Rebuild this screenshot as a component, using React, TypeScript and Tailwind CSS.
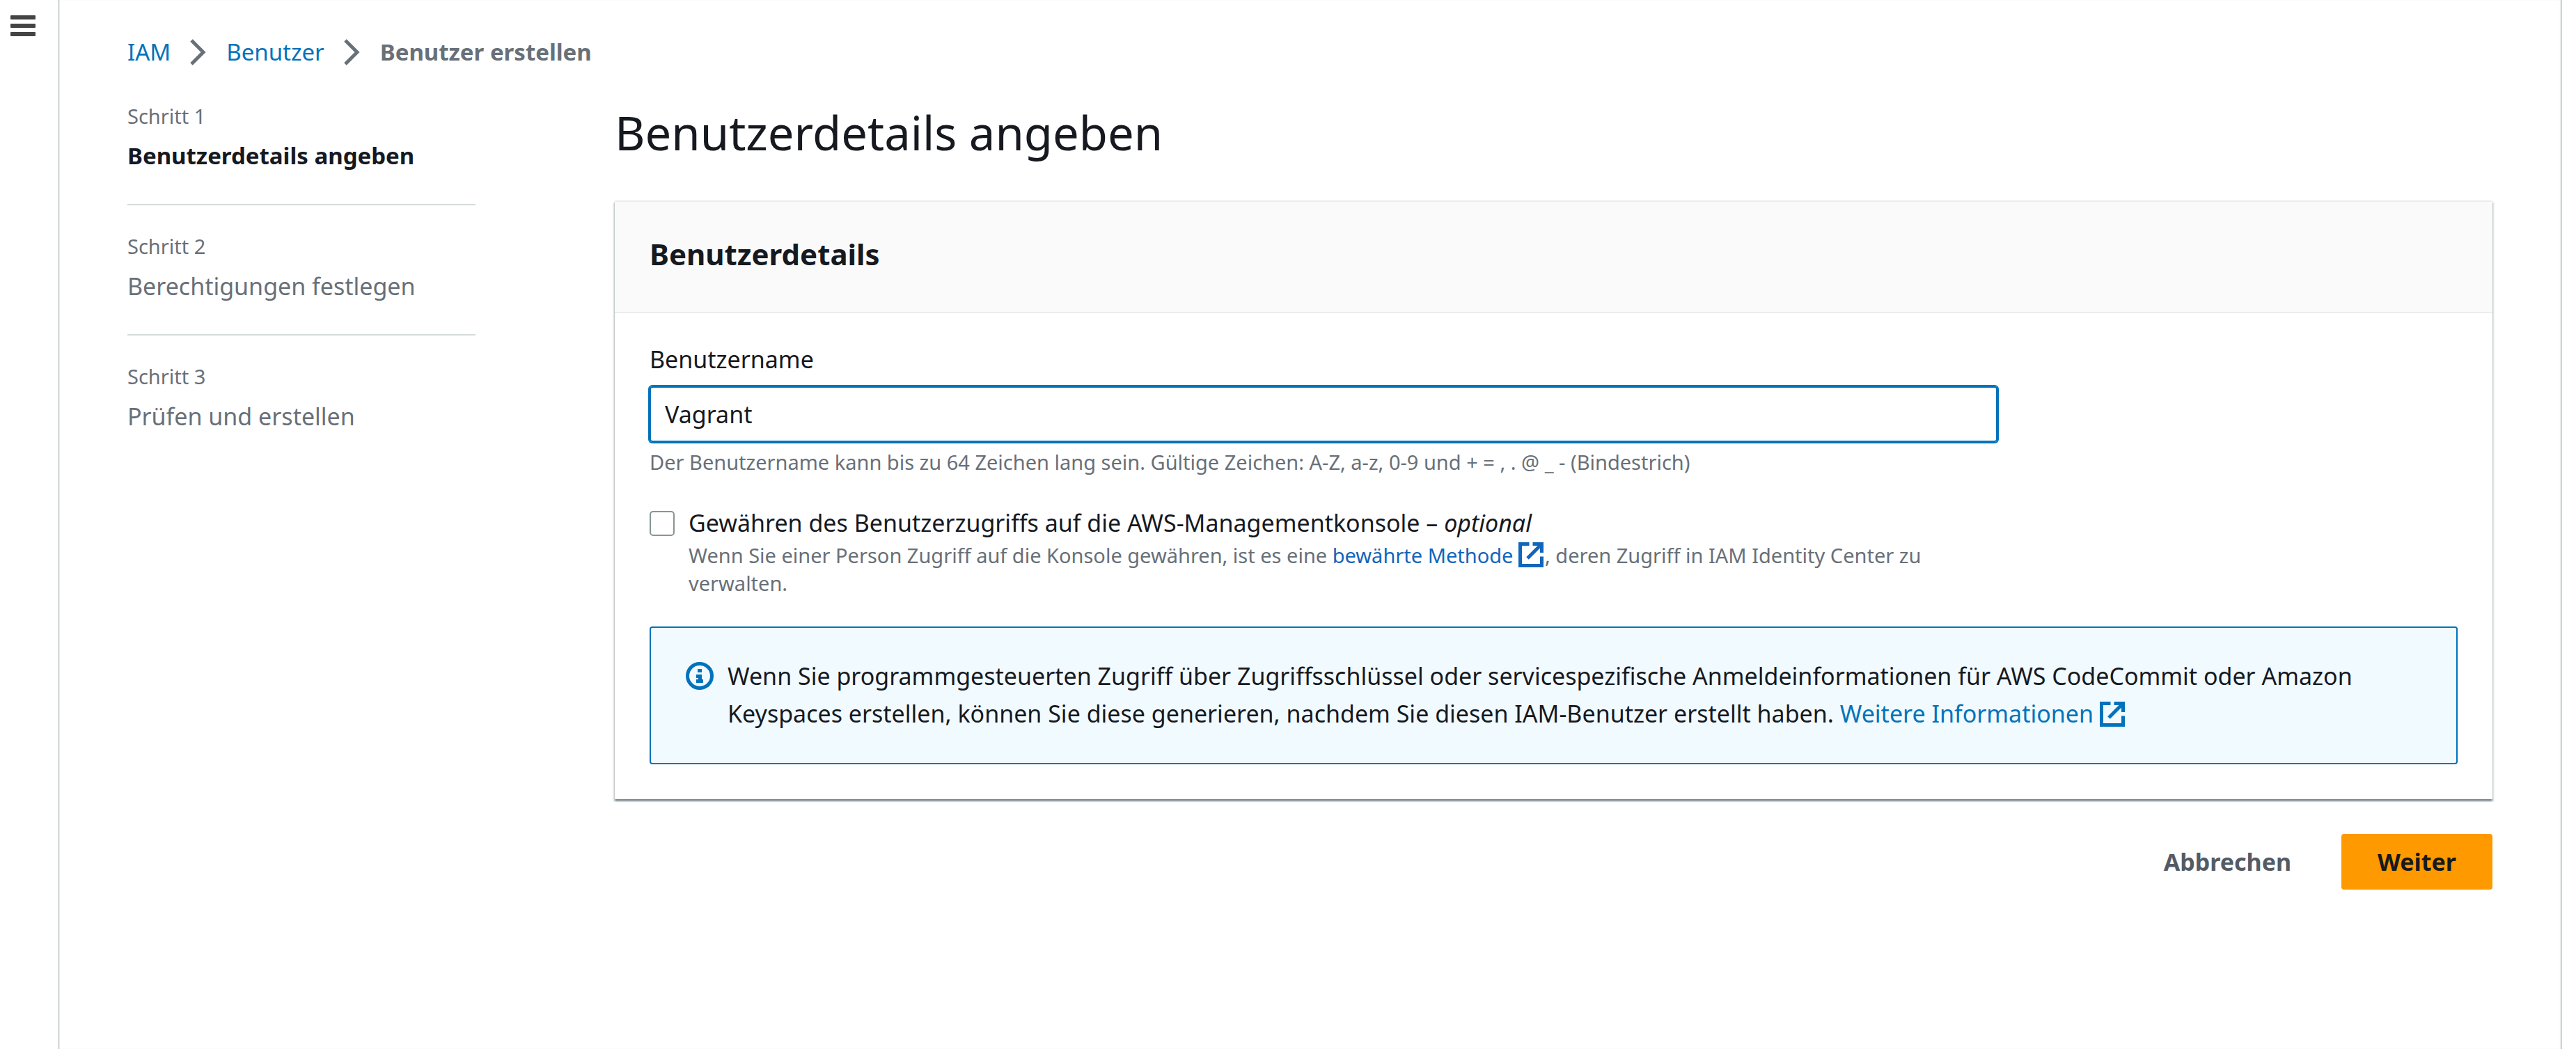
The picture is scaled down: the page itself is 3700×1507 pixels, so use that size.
import { useState, type ReactNode } from "react";

const steps = [
  { label: "Schritt 1", title: "Benutzerdetails angeben", active: true },
  { label: "Schritt 2", title: "Berechtigungen festlegen", active: false },
  { label: "Schritt 3", title: "Prüfen und erstellen", active: false },
];

function MenuIcon() {
  return (
    <svg viewBox="0 0 36 30" className="h-[30px] w-9" fill="#444444" aria-hidden="true">
      <rect width="36" height="6" rx="1" />
      <rect y="12" width="36" height="6" rx="1" />
      <rect y="24" width="36" height="6" rx="1" />
    </svg>
  );
}

function ChevronIcon() {
  return (
    <svg viewBox="0 0 24 38" className="h-[38px] w-6 shrink-0" fill="none" stroke="#687078" strokeWidth="5" aria-hidden="true">
      <path d="M2 2 19 19 2 36" />
    </svg>
  );
}

function ExternalIcon() {
  return (
    <svg viewBox="0 0 36 36" className="mr-0.5 inline-block size-9 align-[-6px]" fill="none" stroke="currentColor" strokeWidth="5" aria-hidden="true">
      <path d="M15.5 2.5H2.5V33.5H33.5V20.5" />
      <path d="M20.5 2.5H33.5V15" />
      <path d="M33 3 13 23" />
    </svg>
  );
}

function InfoIcon() {
  return (
    <svg viewBox="0 0 40 40" className="size-10 shrink-0" fill="none" stroke="#0073bb" aria-hidden="true">
      <circle cx="20" cy="20" r="17.5" strokeWidth="5" />
      <path d="M17 10h6v5h-6zM15 18h8v7h2v5H15v-5h3v-2h-3z" fill="#0073bb" stroke="none" />
    </svg>
  );
}

function ExternalLink({ className, children }: { className: string; children: ReactNode }) {
  return (
    <a href="#" className={className}>
      {children} <ExternalIcon />
    </a>
  );
}

export default function App() {
  const [name, setName] = useState("Vagrant");
  const [consoleAccess, setConsoleAccess] = useState(false);

  return (
    <div className="flex min-h-screen bg-white font-['Noto_Sans',sans-serif] text-[34px] leading-[54px] text-[#16191f]">
      <aside className="w-[83px] shrink-0 pt-[22px] pl-[15px]">
        <button type="button" aria-label="Navigation öffnen" className="block">
          <MenuIcon />
        </button>
      </aside>

      <div className="mr-5 min-w-0 flex-1 border-x border-[#c3c9cc] pt-12 pr-[99px] pb-[100px] pl-[99px] shadow-[inset_2px_0_1px_#e6eaea,inset_-2px_0_1px_#e6eaea]">
        <nav aria-label="Breadcrumb" className="mb-[45px] flex items-center gap-7 text-[33px]">
          <a href="#" className="text-[#0073bb]">IAM</a>
          <ChevronIcon />
          <a href="#" className="text-[#0073bb]">Benutzer</a>
          <ChevronIcon />
          <span className="font-bold text-[#687078]">Benutzer erstellen</span>
        </nav>

        <div className="grid grid-cols-[500px_minmax(0,1fr)] gap-[200px]">
          <ol>
            {steps.map((step) => (
              <li
                key={step.label}
                className="mb-[39px] border-b-2 border-[#d5dbdb] pb-[42px] last:mb-0 last:border-0 last:pb-0"
              >
                <div className="mb-2.5 text-[29px] leading-10 text-[#687078]">{step.label}</div>
                <div className={step.active ? "text-[33px] font-bold" : "text-[#687078]"}>{step.title}</div>
              </li>
            ))}
          </ol>

          <main>
            <h1 className="mb-[55px] text-[67px] leading-[86px]">Benutzerdetails angeben</h1>

            <form onSubmit={(e) => e.preventDefault()}>
              <section className="border-t-2 border-[#eaeded] bg-white shadow-[0_3px_2px_rgba(0,28,36,0.3),2px_3px_2px_rgba(0,28,36,0.15),-2px_3px_2px_rgba(0,28,36,0.15)]">
                <header className="border-b-2 border-[#eaeded] bg-[#fafafa] px-[50px] pt-12 pb-14">
                  <h2 className="text-[42px] font-bold">Benutzerdetails</h2>
                </header>

                <div className="px-[50px] pt-[39px] pb-[50px]">
                  <div className="w-3/4 pr-3">
                    <label htmlFor="username" className="block">Benutzername</label>
                    <input
                      id="username"
                      type="text"
                      value={name}
                      onChange={(e) => setName(e.target.value)}
                      aria-describedby="username-hint"
                      className="mt-3 block h-20 w-full rounded-[4px] border-2 border-[#0073bb] px-5 ring-2 ring-[#0073bb] outline-none"
                    />
                    <p id="username-hint" className="mt-[9px] text-[29px] leading-10 text-[#687078]">
                      Der Benutzername kann bis zu 64 Zeichen lang sein. Gültige Zeichen: A-Z, a-z, 0-9 und + = , . @ _ - (Bindestrich)
                    </p>

                    <div className="mt-10 flex gap-5">
                      <input
                        id="console-access"
                        type="checkbox"
                        checked={consoleAccess}
                        onChange={(e) => setConsoleAccess(e.target.checked)}
                        aria-describedby="console-hint"
                        className="mt-2.5 size-9 shrink-0 appearance-none rounded-[5px] border-2 border-[#879596] bg-white checked:border-[#0073bb] checked:bg-[#0073bb]"
                      />
                      <div>
                        <label htmlFor="console-access" className="block">
                          Gewähren des Benutzerzugriffs auf die AWS-Managementkonsole – <i>optional</i>
                        </label>
                        <p id="console-hint" className="text-[29px] leading-10 text-[#687078]">
                          Wenn Sie einer Person Zugriff auf die Konsole gewähren, ist es eine{" "}
                          <ExternalLink className="text-[#1166bb]">bewährte Methode</ExternalLink>, deren Zugriff in IAM
                          Identity Center zu verwalten.
                        </p>
                      </div>
                    </div>
                  </div>

                  <div className="mt-[42px] flex gap-5 rounded-[4px] border-2 border-[#0073bb] bg-[#f1faff] px-[50px] pt-[42px] pb-11">
                    <div className="flex h-[54px] items-center">
                      <InfoIcon />
                    </div>
                    <p>
                      Wenn Sie programmgesteuerten Zugriff über Zugriffsschlüssel oder servicespezifische
                      Anmeldeinformationen für AWS CodeCommit oder Amazon Keyspaces erstellen, können Sie diese generieren,
                      nachdem Sie diesen IAM-Benutzer erstellt haben.{" "}
                      <ExternalLink className="text-[#0073bb]">Weitere Informationen</ExternalLink>
                    </p>
                  </div>
                </div>
              </section>

              <div className="mt-[50px] flex justify-end gap-5 font-bold">
                <button type="button" className="h-20 px-[52px] text-[#545b64]">Abbrechen</button>
                <button type="submit" className="h-20 rounded-[4px] bg-[#ff9900] px-[52px]">Weiter</button>
              </div>
            </form>
          </main>
        </div>
      </div>
    </div>
  );
}
